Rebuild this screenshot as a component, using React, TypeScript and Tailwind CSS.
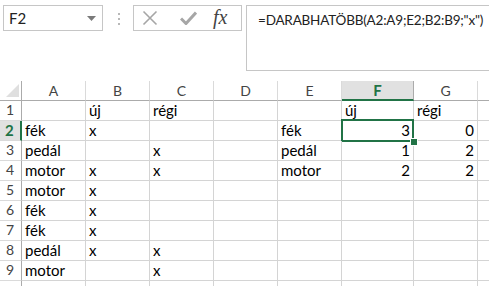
import React from "react";

const cols = [
  { key: "A", w: "w-[64px]" },
  { key: "B", w: "w-[64px]" },
  { key: "C", w: "w-[64px]" },
  { key: "D", w: "w-[64px]" },
  { key: "E", w: "w-[64px]" },
  { key: "F", w: "w-[72px]" },
  { key: "G", w: "w-[64px]" },
];

type Cell = string | number | null;

// A..G per row
const rows: Cell[][] = [
  [null, "új", "régi", null, null, "új", "régi"],
  ["fék", "x", null, null, "fék", 3, 0],
  ["pedál", null, "x", null, "pedál", 1, 2],
  ["motor", "x", "x", null, "motor", 2, 2],
  ["motor", "x", null, null, null, null, null],
  ["fék", "x", null, null, null, null, null],
  ["fék", "x", null, null, null, null, null],
  ["pedál", "x", "x", null, null, null, null],
  ["motor", null, "x", null, null, null, null],
  [null, null, null, null, null, null, null],
];

const font = "font-['Lato','Liberation_Sans',sans-serif]";

function TopBar() {
  return (
    <div className="flex items-start h-[81px]">
      {/* name box */}
      <div className="shrink-0 ml-[3px] mt-[5px] w-[100px] h-[26px] border border-[#c6c6c6] flex items-center justify-between pl-[5px] pr-[6px]">
        <span className="text-[15px] text-[#222]">F2</span>
        <svg width="9" height="5" viewBox="0 0 9 5">
          <path d="M0 0h9L4.5 5z" fill="#7a7a7a" />
        </svg>
      </div>

      {/* grip dots */}
      <div className="shrink-0 ml-[15px] mt-[13px] flex flex-col gap-[3px]">
        <div className="w-[2px] h-[2px] bg-[#b8b8b8]" />
        <div className="w-[2px] h-[2px] bg-[#b8b8b8]" />
        <div className="w-[2px] h-[2px] bg-[#b8b8b8]" />
      </div>

      {/* cancel / enter / fx */}
      <div className="shrink-0 ml-[13px] mt-[5px] w-[109px] h-[26px] border border-[#c6c6c6] flex items-center">
        <svg className="ml-[8px]" width="16" height="16" viewBox="0 0 16 16">
          <path d="M1.5 1.5l13 13M14.5 1.5l-13 13" stroke="#a6a6a6" strokeWidth="1.6" />
        </svg>
        <svg className="ml-[22px]" width="17" height="14" viewBox="0 0 17 14">
          <path d="M1 7.5l5 5L16 1.5" stroke="#a6a6a6" strokeWidth="3" fill="none" />
        </svg>
        <span className="ml-[16px] text-[20px] leading-none italic text-[#444] font-['Liberation_Serif',serif] -mt-[2px]">
          fx
        </span>
      </div>

      {/* formula bar */}
      <div className="ml-[4px] mt-[5px] flex-1 min-w-0 overflow-hidden h-[66px] border-y border-l border-[#c6c6c6] pl-[11px] pt-[5px]">
        <span className={`block text-[13.5px] leading-[18px] tracking-[-0.2px] text-[#222] whitespace-nowrap ${font}`}>
          =DARABHATÖBB(A2:A9;E2;B2:B9;"x")
        </span>
      </div>
    </div>
  );
}

function Grid() {
  return (
    <div className={`flex flex-col ${font}`}>
      {/* column headers */}
      <div className="flex h-[20px]">
        <div className="shrink-0 w-[22px] border-r border-b border-[#ababab] relative">
          <svg className="absolute right-[2px] bottom-[3px]" width="13" height="13" viewBox="0 0 13 13">
            <path d="M13 0v13H0z" fill="#dfdfdf" />
          </svg>
        </div>
        {cols.map((c) =>
          c.key === "F" ? (
            <div
              key={c.key}
              className={`${c.w} shrink-0 bg-[#e1e1e1] border-r border-[#ababab] border-b-2 border-b-[#217346] flex items-center justify-center text-[15px] font-bold text-[#217346]`}
            >
              {c.key}
            </div>
          ) : (
            <div
              key={c.key}
              className={`${c.w} shrink-0 border-r border-b border-r-[#dadada] border-b-[#ababab] flex items-center justify-center text-[14px] text-[#444]`}
            >
              {c.key}
            </div>
          )
        )}
        <div className="flex-1 border-b border-[#ababab]" />
      </div>

      {rows.map((r, i) => {
        const n = i + 1;
        const sel = n === 2;
        const label = n < 10 ? n : null;
        return (
          <div key={n} className="flex h-[20px]">
            <div
              className={
                sel
                  ? "shrink-0 w-[22px] bg-[#e1e1e1] border-b border-b-[#dadada] border-r-2 border-r-[#217346] flex items-end pb-[1px] pl-[5px] text-[15px] font-bold leading-[18px] text-[#217346]"
                  : "shrink-0 w-[22px] border-b border-b-[#dadada] border-r border-r-[#ababab] flex items-end pb-[1px] pl-[6px] text-[14px] leading-[18px] text-[#444]"
              }
            >
              {label}
            </div>
            {cols.map((c, j) => {
              const v = r[j];
              const num = typeof v === "number";
              const active = sel && c.key === "F";
              return (
                <div
                  key={c.key}
                  className={`${c.w} shrink-0 relative border-r border-b border-[#d4d4d4] flex items-end pb-[1px] text-[15px] leading-[18px] text-black ${
                    num ? "justify-end pr-[3px]" : "pl-[3px]"
                  }`}
                >
                  {active && (
                    <>
                      <div className="absolute -left-px -top-[2px] right-[-1px] bottom-[-2px] border-2 border-[#217346]" />
                      <div className="absolute z-10 right-[-5px] bottom-[-6px] w-[8px] h-[8px] bg-[#217346] border border-white" />
                    </>
                  )}
                  <span className="relative">{v}</span>
                </div>
              );
            })}
            <div className="flex-1 border-b border-[#d4d4d4]" />
          </div>
        );
      })}
    </div>
  );
}

export default function App() {
  return (
    <div className={`w-[489px] h-[286px] overflow-hidden bg-white ${font}`}>
      <TopBar />
      <Grid />
    </div>
  );
}
